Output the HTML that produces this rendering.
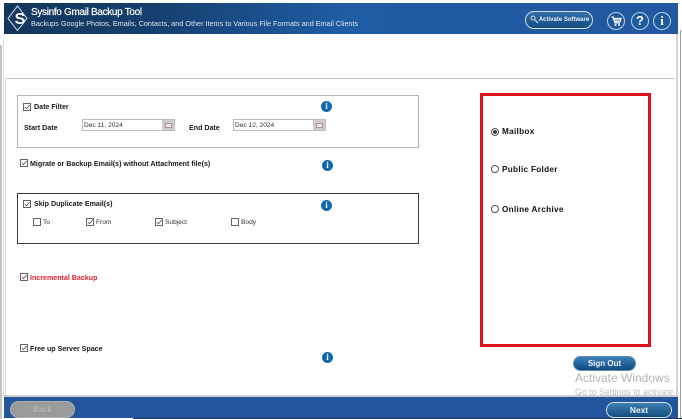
<!DOCTYPE html>
<html><head><meta charset="utf-8">
<style>
html,body{margin:0;padding:0;width:682px;height:419px;overflow:hidden;background:#fff;font-family:"Liberation Sans",sans-serif;color:#111}
.a{position:absolute;white-space:nowrap}
.b{font-weight:bold;font-size:7.1px;line-height:10px;color:#1a1a1a}
.n{font-size:6.6px;line-height:10px;color:#333}
.cb{position:absolute;width:6px;height:6px;border:1px solid #666;background:#fff}
.cb svg{position:absolute;left:0;top:0;width:6px;height:6px}
.info{position:absolute;width:11px;height:11px;border-radius:50%;background:#0f68ad;color:#fff;font:bold 9px/11px "Liberation Serif",serif;text-align:center}
.date{position:absolute;height:10px;width:91px;border:1px solid #bbb;background:#fff;font-size:6.6px;line-height:11px;color:#333;text-indent:1px}
.date i{position:absolute;right:0;top:0;width:12px;height:10px;background:#ccc;}
.date i:after{content:"";position:absolute;left:3px;top:3px;width:5px;height:3px;border:1px solid #b08a8a;background:#eee}
.rd{position:absolute;width:6px;height:6px;border:1px solid #555;border-radius:50%;background:#fff}
.rt{font-weight:bold;font-size:8.2px;line-height:10px;color:#111;letter-spacing:.3px}
.pill{position:absolute;border-radius:11px;text-align:center;font-weight:bold;color:#eaf2fa;box-sizing:border-box}
.ic{position:absolute;width:16px;height:16px;border-radius:50%;background:#1f5a9e;border:1px solid #b8d3ee;box-sizing:content-box;color:#fff;text-align:center;font-weight:bold}
</style></head><body>
<div class="a" style="left:0;top:45px;width:2px;height:374px;background:#c4c4c4"></div>
<div class="a" style="left:3px;top:40px;width:1px;height:357px;background:#dedede"></div>
<div class="a" style="left:676px;top:34px;width:2px;height:363px;background:#d5d5d5"></div>
<div class="a" style="left:680px;top:30px;width:1px;height:389px;background:#a0a0a0"></div>

<div class="a" style="left:4px;top:3px;width:674px;height:31px;background:linear-gradient(90deg,#13365c 0%,#163f6d 22%,#1f5ca3 50%,#22589f 100%)"></div>
<svg class="a" style="left:7px;top:5px" width="24" height="27" viewBox="0 0 24 27">
<path d="M10.500 1L20 13.500 10.500 25.500 1 13.500Z" fill="#16395f" stroke="#d5e2ee" stroke-width="1"/>
<text x="13" y="19" text-anchor="middle" font-family="Liberation Sans" font-weight="bold" font-size="16" fill="#fff">S</text>
</svg>
<div class="a" style="left:31px;top:7px;font-size:10px;line-height:12px;color:#fff;letter-spacing:-.32px;-webkit-text-stroke:.2px #fff">Sysinfo Gmail Backup Tool</div>
<div class="a" style="left:31px;top:19px;font-size:7.25px;line-height:10px;color:#d9e5f1">Backups Google Photos, Emails, Contacts, and Other Items to Various File Formats and Email Clients</div>

<div class="pill" style="left:525px;top:11px;width:68px;height:18px;background:linear-gradient(#2f6ea8,#164c80);border:1px solid #cfe0f0;font-size:6px;line-height:16px;padding-left:10px">Activate Software</div>
<svg class="a" style="left:530px;top:15px" width="9" height="10" viewBox="0 0 9 10"><circle cx="3" cy="3" r="2" fill="none" stroke="#c8d8e8" stroke-width="1"/><path d="M4.500 4.500L8 8" stroke="#c8d8e8" stroke-width="1.200"/></svg>

<div class="ic" style="left:607px;top:12px"><svg width="16" height="16" viewBox="0 0 16 16" style="display:block"><path d="M3.500 4h1.500l2 6h4.500l1.500-4.500H6" fill="none" stroke="#fff" stroke-width="1.200"/><path d="M6.500 7h5M7 8.500h4" stroke="#fff" stroke-width=".9"/><circle cx="7.500" cy="12" r="1" fill="#fff"/><circle cx="11" cy="12" r="1" fill="#fff"/></svg></div>
<div class="ic" style="left:631px;top:12px;font-size:13px;line-height:16px">?</div>
<div class="ic" style="left:653px;top:12px;font:bold 13px/16px 'Liberation Serif',serif">i</div>

<div class="a" style="left:5px;top:78px;width:670px;height:1px;background:#c4c4c4"></div>
<div class="a" style="left:5px;top:78px;width:1px;height:319px;background:#d4d4d4"></div>
<div class="a" style="left:4px;top:395px;width:674px;height:2px;background:#cfcfcf"></div>

<!-- Date filter -->
<div class="a" style="left:17px;top:95px;width:400px;height:51px;border:1px solid #b5b5b5"></div>
<div class="cb" style="left:23px;top:103px"><svg viewBox="0 0 7 7"><path d="M1 3.500L3 5.500 6.500 1" fill="none" stroke="#444" stroke-width=".9"/></svg></div>
<div class="a b" style="left:34px;top:102px">Date Filter</div>
<div class="info" style="left:321px;top:101px">i</div>
<div class="a b" style="left:24px;top:123px;">Start Date</div>
<div class="date" style="left:82px;top:119px;">Dec 11, 2024<i></i></div>
<div class="a b" style="left:189px;top:123px;">End Date</div>
<div class="date" style="left:233px;top:119px;">Dec 12, 2024<i></i></div>

<div class="cb" style="left:20px;top:159px"><svg viewBox="0 0 7 7"><path d="M1 3.500L3 5.500 6.500 1" fill="none" stroke="#444" stroke-width=".9"/></svg></div>
<div class="a b" style="left:30px;top:159px">Migrate or Backup Email(s) without Attachment file(s)</div>
<div class="info" style="left:322px;top:160px">i</div>

<!-- Skip -->
<div class="a" style="left:17px;top:193px;width:400px;height:49px;border:1px solid #3c3c3c"></div>
<div class="cb" style="left:23px;top:200px"><svg viewBox="0 0 7 7"><path d="M1 3.500L3 5.500 6.500 1" fill="none" stroke="#444" stroke-width=".9"/></svg></div>
<div class="a b" style="left:34px;top:199px">Skip Duplicate Email(s)</div>
<div class="info" style="left:321px;top:200px">i</div>
<div class="cb" style="left:33px;top:218px"></div>
<div class="a n" style="left:43px;top:218px">To</div>
<div class="cb" style="left:86px;top:218px"><svg viewBox="0 0 7 7"><path d="M1 3.500L3 5.500 6.500 1" fill="none" stroke="#444" stroke-width=".9"/></svg></div>
<div class="a n" style="left:96px;top:218px">From</div>
<div class="cb" style="left:155px;top:218px"><svg viewBox="0 0 7 7"><path d="M1 3.500L3 5.500 6.500 1" fill="none" stroke="#444" stroke-width=".9"/></svg></div>
<div class="a n" style="left:165px;top:218px">Subject</div>
<div class="cb" style="left:231px;top:218px"></div>
<div class="a n" style="left:241px;top:218px">Body</div>

<div class="cb" style="left:20px;top:273px"><svg viewBox="0 0 7 7"><path d="M1 3.500L3 5.500 6.500 1" fill="none" stroke="#444" stroke-width=".9"/></svg></div>
<div class="a b" style="left:30px;top:273px;color:#e0202c">Incremental Backup</div>

<div class="cb" style="left:20px;top:344px"><svg viewBox="0 0 7 7"><path d="M1 3.500L3 5.500 6.500 1" fill="none" stroke="#444" stroke-width=".9"/></svg></div>
<div class="a b" style="left:30px;top:344px">Free up Server Space</div>
<div class="info" style="left:322px;top:352px">i</div>

<!-- Red box -->
<div class="a" style="left:480px;top:93px;width:165px;height:248px;border:3px solid #e0101c"></div>
<div class="rd" style="left:491px;top:128px"></div>
<div class="a" style="left:493px;top:130px;width:4px;height:4px;border-radius:50%;background:#444"></div>
<div class="a rt" style="left:502px;top:127px">Mailbox</div>
<div class="rd" style="left:491px;top:165px"></div>
<div class="a rt" style="left:502px;top:165px">Public Folder</div>
<div class="rd" style="left:491px;top:205px"></div>
<div class="a rt" style="left:502px;top:205px">Online Archive</div>

<div class="pill" style="left:573px;top:356px;width:63px;height:15px;background:linear-gradient(#3a80b8,#114a80);border:1px solid #5b8cb5;font-size:8px;line-height:13px">Sign Out</div>

<div class="a" style="left:575px;top:371px;font-size:12px;line-height:15px;color:#b5b5b5">Activate Windows</div>
<div class="a" style="left:575px;top:387px;width:101px;height:8px;overflow:hidden;font-size:8.8px;line-height:11px;color:#c0c0c0">Go to Settings to activate Windows</div>

<!-- Bottom bar -->
<div class="a" style="left:4px;top:397px;width:674px;height:21px;background:#22559b"></div>
<div class="a" style="left:133px;top:418px;width:549px;height:1px;background:#22324a"></div>
<div class="pill" style="left:10px;top:401px;width:65px;height:17px;background:#9a9a9a;border:1px solid #b0b0b0;color:#b4b4b4;font-size:8px;line-height:15px;border-radius:9px">Back</div>
<div class="pill" style="left:606px;top:402px;width:66px;height:16px;background:linear-gradient(#3d7fb0,#134d80);border:1px solid #d3e2ee;font-size:8.4px;line-height:14px;border-radius:9px">Next</div>
</body></html>
